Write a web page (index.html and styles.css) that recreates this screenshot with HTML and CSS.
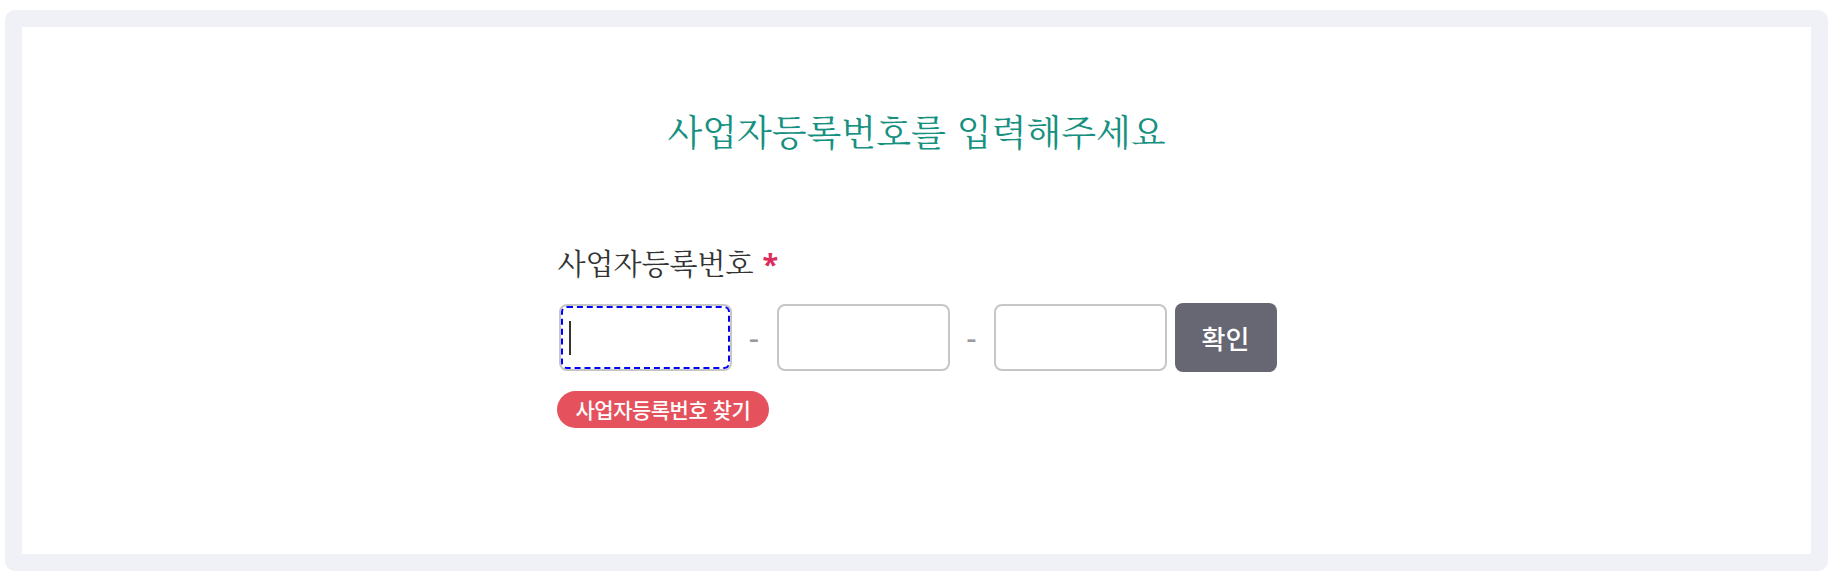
FILE: index.html
```html
<!DOCTYPE html>
<html lang="ko">
<head>
<meta charset="utf-8">
<link rel="stylesheet" href="styles.css">
</head>
<body>
<div class="frame">
  <h1 class="title">사업자등록번호를 입력해주세요</h1>
  <div class="form">
    <div class="label">사업자등록번호 <span class="req">*</span></div>
    <div class="row">
      <div class="input focused"><span class="caret"></span></div>
      <span class="dash">-</span>
      <div class="input"></div>
      <span class="dash">-</span>
      <div class="input"></div>
      <button class="btn">확인</button>
    </div>
    <span class="badge">사업자등록번호 찾기</span>
  </div>
</div>
</body>
</html>
```
FILE: styles.css
```css
html, body { margin: 0; padding: 0; background: #fff; }
.frame {
  box-sizing: border-box;
  margin: 10px 10px 8px 5px;
  height: 561px;
  border: 17px solid #f0f1f6;
  border-radius: 10px;
  background: #fff;
}
.title {
  margin: 0;
  padding-top: 83px;
  text-align: center;
  font-family: "Noto Serif CJK KR", serif;
  font-weight: normal;
  font-size: 36px;
  line-height: 42px;
  color: #16907f;
}
.form {
  width: 720px;
  margin: 0 auto;
  padding-top: 94px;
}
.label {
  font-family: "Noto Serif CJK KR", serif;
  font-size: 29px;
  line-height: 34px;
  color: #333;
  padding-left: 1px;
}
.req { color: #dd2a5c; font-family: "Noto Sans", sans-serif; font-weight: bold; }
.row {
  display: flex;
  align-items: center;
  margin-top: 22px;
  padding-left: 2px;
}
.input {
  box-sizing: border-box;
  width: 173px;
  height: 67px;
  border: 2px solid #c6c6c6;
  border-radius: 8px;
  background: #fff;
  display: flex;
  align-items: center;
}
.input.focused { outline: 2px dashed #0000ff; outline-offset: -4px; }
.caret { display: block; width: 2px; height: 34px; background: #333; margin-left: 8px; }
.dash {
  width: 45px;
  text-align: center;
  font-family: "Noto Sans", sans-serif;
  font-size: 32px;
  line-height: 32px;
  color: #9a9a9a;
}
.row .dash:nth-of-type(2) { width: 44px; }
.btn {
  box-sizing: border-box;
  margin-left: 8px;
  width: 102px;
  height: 69px;
  border: 0;
  border-radius: 8px;
  background: #676673;
  color: #fff;
  font-family: "Noto Sans CJK KR", sans-serif;
  font-size: 26px;
  font-weight: 500;
}
.badge {
  display: inline-block;
  margin-top: 19px;
  height: 37px;
  line-height: 37px;
  padding: 0 19px;
  border-radius: 19px;
  background: #e5525d;
  color: #fff;
  font-family: "Noto Sans CJK KR", sans-serif;
  font-size: 21px;
  font-weight: 500;
  letter-spacing: -0.5px;
}
```
